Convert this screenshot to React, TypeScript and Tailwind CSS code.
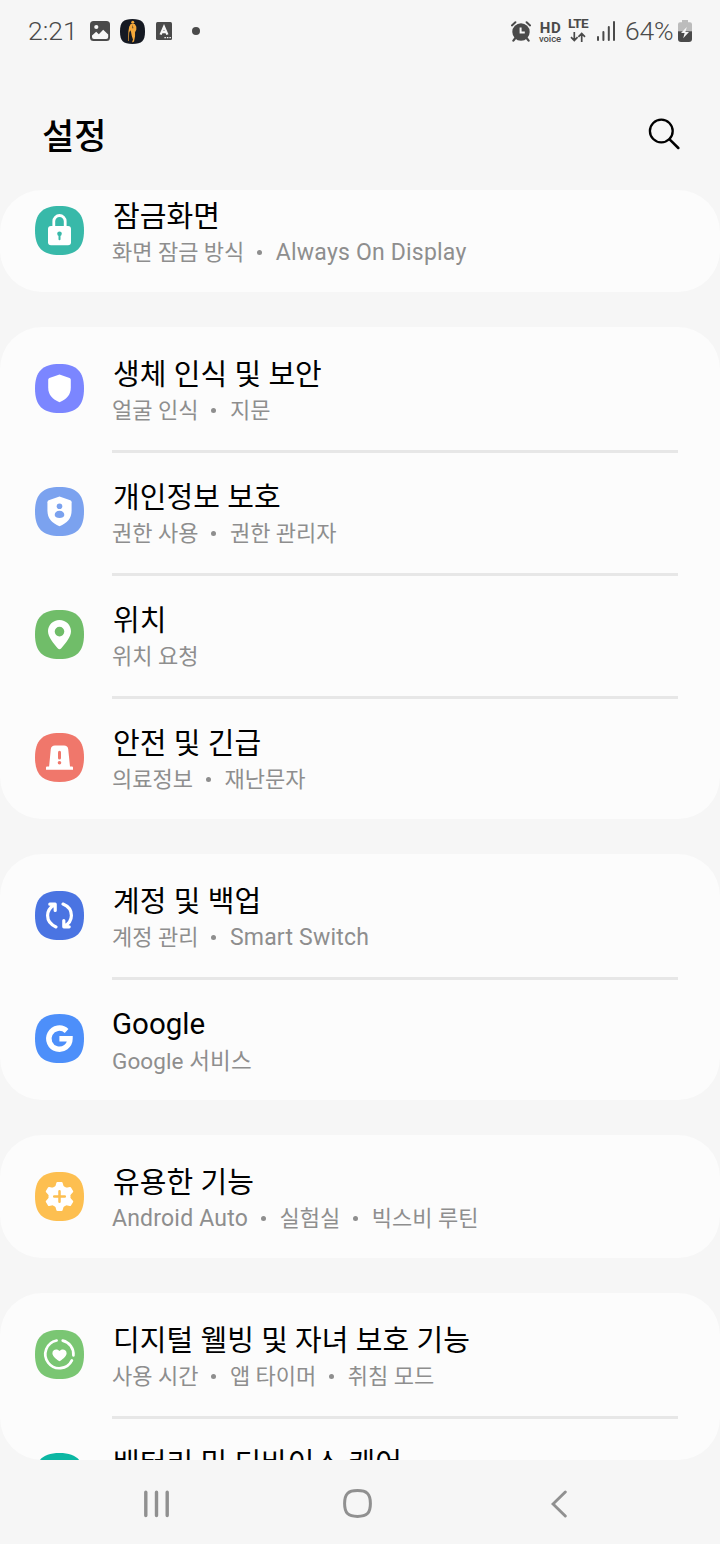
import type { ReactNode } from 'react'
import { clsx } from 'clsx'

interface Item {
  title: string
  sub: string[]
  color: string
  icon: ReactNode
}

const SHIELD = 'M24.5 10.5 L34.6 13.9 Q35.8 14.4 35.8 15.8 V23.5 C35.8 31 31.5 35.3 24.5 38.2 C17.5 35.3 13.2 31 13.2 23.5 V15.8 Q13.2 14.4 14.4 13.9 Z'

const LockIcon = (
  <>
    <path d="M18.8 21 V15.2 a5.7 5.7 0 0 1 11.4 0 V21" fill="none" stroke="#fff" strokeWidth="2.8" />
    <rect x="13" y="20" width="23" height="19.3" rx="3" />
    <circle cx="24.5" cy="27.7" r="2.3" className="fill-[#38b9a9]" />
    <path d="M24.5 28 V33.2" className="stroke-[#38b9a9]" strokeWidth="2" strokeLinecap="round" />
  </>
)

const PrivacyIcon = (
  <>
    <path d={SHIELD} transform="translate(-1.7 -1.7) scale(1.07)" />
    <circle cx="24.5" cy="19.3" r="2.8" className="fill-[#7ba2ef]" />
    <path d="M24.5 23.8 c3 0 4.8 1.8 4.8 4.2 c0 2 -2.2 3 -4.8 3 s-4.8 -1 -4.8 -3 c0 -2.4 1.8 -4.2 4.8 -4.2z" className="fill-[#7ba2ef]" />
  </>
)

const PinIcon = (
  <path
    fillRule="evenodd"
    d="M24.5 10 C31 10 36 15 36 21.3 C36 27.5 30 33.5 26.3 38.3 Q24.5 40.4 22.7 38.3 C19 33.5 13 27.5 13 21.3 C13 15 18 10 24.5 10 Z M24.5 16.8 a4.8 4.8 0 1 0 0 9.6 a4.8 4.8 0 1 0 0 -9.6 Z"
  />
)

const SirenIcon = (
  <>
    <path d="M20 12.5 H29 Q32.8 12.5 33.2 16 L35 33.6 H37 Q38 33.6 38 34.6 V36.8 H11 V34.6 Q11 33.6 12 33.6 H14.1 L15.8 16 Q16.2 12.5 20 12.5 Z" />
    <path d="M24.5 19.2 V25" className="stroke-[#f0776b]" strokeWidth="3" strokeLinecap="round" />
    <circle cx="24.5" cy="29.8" r="1.8" className="fill-[#f0776b]" />
  </>
)

const SyncIcon = (
  <g fill="none" stroke="#fff" strokeWidth="3.2" strokeLinecap="round" strokeLinejoin="round">
    <path d="M21 35.9 C15.5 33.6 12.6 29.6 12.6 24.6 C12.6 20 15 16.2 20 13.6 M14.8 13.2 H20.2 V19.4" />
    <path d="M28 13.1 C33.5 15.4 36.4 19.4 36.4 24.4 C36.4 29 34 32.8 29 35.4 M34.2 35.8 H28.8 V29.6" />
  </g>
)

const GoogleIcon = (
  <path
    d="M31.6 16.9 A10.6 10.6 0 1 0 35 24.8 H24.4"
    fill="none"
    stroke="#fff"
    strokeWidth="5.4"
  />
)

const GearIcon = (
  <>
    {[0, 60, 120].map((angle) => (
      <path
        key={angle}
        d="M22.4 10 H26.6 Q27.4 10 27.6 10.8 L29 15.5 V33.5 L27.6 38.2 Q27.4 39 26.6 39 H22.4 Q21.6 39 21.4 38.2 L20 33.5 V15.5 L21.4 10.8 Q21.6 10 22.4 10 Z"
        transform={`rotate(${angle} 24.5 24.5)`}
      />
    ))}
    <circle cx="24.5" cy="24.5" r="11" />
    <path d="M24.5 19.2 V29.8 M19.2 24.5 H29.8" className="stroke-[#fdbf50]" strokeWidth="2.5" strokeLinecap="round" />
  </>
)

const WellbeingIcon = (
  <>
    <path
      d="M27.7 10.6 A14 14 0 0 1 38.4 25.4 M36.9 30.4 A14 14 0 1 1 21.6 10.5"
      fill="none"
      stroke="#fff"
      strokeWidth="2.7"
      strokeLinecap="round"
    />
    <path d="M24.5 21 C26 18.7 31.6 18.6 31.6 23.2 C31.6 26 28.4 28.4 25.4 30.8 Q24.5 31.5 23.6 30.8 C20.6 28.4 17.4 26 17.4 23.2 C17.4 18.6 23 18.7 24.5 21 Z" />
  </>
)

const GROUPS: Item[][] = [
  [
    { title: '잠금화면', sub: ['화면 잠금 방식', 'Always On Display'], color: 'fill-[#38b9a9]', icon: LockIcon },
  ],
  [
    { title: '생체 인식 및 보안', sub: ['얼굴 인식', '지문'], color: 'fill-[#7b86ff]', icon: <path d={SHIELD} /> },
    { title: '개인정보 보호', sub: ['권한 사용', '권한 관리자'], color: 'fill-[#7ba2ef]', icon: PrivacyIcon },
    { title: '위치', sub: ['위치 요청'], color: 'fill-[#70bd69]', icon: PinIcon },
    { title: '안전 및 긴급', sub: ['의료정보', '재난문자'], color: 'fill-[#f0776b]', icon: SirenIcon },
  ],
  [
    { title: '계정 및 백업', sub: ['계정 관리', 'Smart Switch'], color: 'fill-[#4a74e2]', icon: SyncIcon },
    { title: 'Google', sub: ['Google 서비스'], color: 'fill-[#4d8ffa]', icon: GoogleIcon },
  ],
  [
    { title: '유용한 기능', sub: ['Android Auto', '실험실', '빅스비 루틴'], color: 'fill-[#fdbf50]', icon: GearIcon },
  ],
  [
    { title: '디지털 웰빙 및 자녀 보호 기능', sub: ['사용 시간', '앱 타이머', '취침 모드'], color: 'fill-[#7ac673]', icon: WellbeingIcon },
    { title: '배터리 및 디바이스 케어', sub: [], color: 'fill-[#0cb7a3]', icon: null },
  ],
]

function subTextClass(text: string) {
  if (/^[A-Za-z ]+$/.test(text)) return 'text-[23px] tracking-[0.2px]'
  if (/^[A-Za-z]/.test(text)) return 'text-[22.5px] tracking-[0.1px]'
  return 'text-[22px]'
}

export default function App() {
  return (
    <div className="flex h-[1544px] w-[720px] flex-col overflow-hidden bg-[#f6f6f6] font-['Roboto','Noto_Sans_CJK_KR',sans-serif]">
      <StatusBar />

      <header className="flex h-32 shrink-0 items-center justify-between pr-10 pl-[42px]">
        <h1 className="mt-6 text-[35px] leading-[48px] font-medium text-black">설정</h1>
        <svg className="mt-4 size-8" viewBox="0 0 32 32" fill="none" stroke="#000" strokeLinecap="round">
          <circle cx="13.3" cy="13" r="11.4" strokeWidth="2.3" />
          <path d="M21.6 21.3 L30.3 30" strokeWidth="2.5" />
        </svg>
      </header>

      {/* Scrolled list, first and last cards are cut by the viewport */}
      <main className="h-[1270px] shrink-0 overflow-hidden rounded-[42px]">
        <div className="-mt-[21px] flex flex-col gap-[35px]">
          {GROUPS.map((items) => (
            <section key={items[0].title} className="rounded-[42px] bg-[#fcfcfc]">
              {items.map((item, i) => (
                <SettingRow key={item.title} item={item} divider={i > 0} />
              ))}
            </section>
          ))}
        </div>
      </main>

      <NavBar />
    </div>
  )
}

function SettingRow({ item, divider }: { item: Item; divider: boolean }) {
  const latinTitle = /^[A-Za-z]/.test(item.title)

  return (
    <div className="flex h-[123px] pr-[42px] pl-[35px]">
      <svg className="mt-[37px] size-[49px] shrink-0" viewBox="0 0 49 49" fill="#fff">
        <path
          className={item.color}
          d="M0 24.5 C0 7.5 7.5 0 24.5 0 S49 7.5 49 24.5 41.5 49 24.5 49 0 41.5 0 24.5 Z"
        />
        {item.icon}
      </svg>
      <div className={clsx('ml-7 flex-1 border-t-3', divider ? 'border-[#e7e7e7]' : 'border-transparent')}>
        <div
          className={clsx(
            'leading-9 whitespace-nowrap text-black',
            latinTitle ? 'mt-[26px] mb-[3px] text-[29.5px]' : 'mt-[27px] mb-0.5 pl-px text-[29px] tracking-[0.05px]'
          )}
        >
          {item.title}
        </div>
        {item.sub.length > 0 && (
          <div className="flex leading-8 whitespace-nowrap text-[#8e8e8e]">
            {item.sub.map((text, i) => (
              <span key={text} className={clsx('flex items-center leading-8', subTextClass(text))}>
                {i > 0 && <span className="mr-[13.5px] mb-0.5 ml-[13px] size-[5px] rounded-full bg-[#8e8e8e]" />}
                {text}
              </span>
            ))}
          </div>
        )}
      </div>
    </div>
  )
}

function StatusBar() {
  return (
    <div className="flex h-[62px] shrink-0 items-center justify-between pr-7 pl-7 text-[#4a4a4a]">
      <div className="flex items-center">
        <span className="w-[62px] text-[26.5px] leading-8 font-light">2:21</span>
        <svg className="size-5" viewBox="0 0 20 20">
          <rect width="20" height="20" rx="3.5" fill="currentColor" />
          <circle cx="6.3" cy="6" r="2.1" fill="#f6f6f6" />
          <path d="M2 15.5 V14.5 L6.2 10.8 L8.8 13.2 L13.2 8.8 L18.2 13.6 V16 Q18.2 18 16.2 18 H4 Q2 18 2 16 Z" fill="#f6f6f6" />
        </svg>
        <svg className="ml-2.5 size-[25px]" viewBox="0 0 49 49">
          <path d="M0 24.5 C0 6 6 0 24.5 0 S49 6 49 24.5 43 49 24.5 49 0 43 0 24.5 Z" fill="#151922" />
          <g fill="#f4a83a">
            <circle cx="25" cy="6.5" r="3" />
            <path d="M21 10 L29 10 L32 15 L32 21 L29.5 26 L29.5 34 L27.5 44 L23.5 46 L25.5 40 L23 33 L21.5 25 L20 22 L18 27 L17.2 43 L16 43 L16.5 24 L18 15 Z" />
          </g>
          <path d="M25 11 L24.3 18 L26 18 Z" fill="#151922" />
        </svg>
        <svg className="ml-[11px] h-[18px] w-4" viewBox="0 0 16 18">
          <rect width="16" height="18" rx="1.5" fill="currentColor" />
          <path d="M4.6 12.6 L8 4.8 L11.4 12.6 M5.8 10.2 H10.2" fill="none" stroke="#f6f6f6" strokeWidth="2.3" />
          <path d="M8.4 15.6 H15" stroke="#f6f6f6" strokeWidth="1.2" strokeDasharray="1.5 1" />
        </svg>
        <span className="ml-5 size-2 rounded-full bg-current" />
      </div>

      <div className="flex items-center">
        <svg className="h-[21px] w-5" viewBox="0 0 20 21" fill="none" stroke="currentColor" strokeLinecap="round">
          <circle cx="10" cy="11" r="8.7" fill="currentColor" stroke="none" />
          <path d="M0.9 4.4 L4.4 1.2 M15.6 1.2 L19.1 4.4" strokeWidth="2" />
          <path d="M4 17.5 L2.4 19.6 M16 17.5 L17.6 19.6" strokeWidth="2.2" />
          <path d="M9.6 6.4 V11.6 H13.8" stroke="#f6f6f6" strokeWidth="2" strokeLinecap="butt" />
        </svg>
        <div className="ml-[7px] flex w-6 flex-col items-center pt-1">
          <span className="pl-px text-[15px] leading-[11px] font-bold tracking-[0.7px]">HD</span>
          <span className="text-[9.5px] leading-[9px] font-medium tracking-[-0.1px]">voice</span>
        </div>
        <div className="ml-1 flex w-6 flex-col items-center">
          <span className="mb-[3px] -mt-[3px] text-[13.5px] leading-[11px] font-bold tracking-[-0.6px]">LTE</span>
          <svg className="h-[10px] w-4" viewBox="0 0 16 10" fill="none" stroke="currentColor" strokeWidth="1.7">
            <path d="M4.3 0 V8.6 M1 5.2 L4.3 8.6 L7.6 5.2 M11.7 10 V1.4 M8.4 4.8 L11.7 1.4 L15 4.8" />
          </svg>
        </div>
        <svg className="ml-[7px] h-5 w-[18px]" viewBox="0 0 18 20" fill="currentColor">
          <rect x="0" y="15" width="2" height="5" rx="1" />
          <rect x="5.4" y="10" width="2" height="10" rx="1" />
          <rect x="10.8" y="5" width="2" height="15" rx="1" />
          <rect x="16" y="0" width="2" height="20" rx="1" />
        </svg>
        <span className="ml-2.5 w-[53px] text-[26.5px] leading-8 font-light tracking-[-0.2px]">64%</span>
        <svg className="h-[22px] w-[14px]" viewBox="0 0 14 22">
          <path d="M4 0 H10 V2.2 H12 Q14 2.2 14 4.2 V11.5 H0 V4.2 Q0 2.2 2 2.2 H4 Z" fill="#bcbcbc" />
          <path d="M0 11.3 H14 V19 Q14 22 11 22 H3 Q0 22 0 19 Z" fill="currentColor" />
          <path d="M8.8 7 L3 13 H6.6 L5.2 18.2 L11 12 H7.4 Z" fill="#f6f6f6" />
        </svg>
      </div>
    </div>
  )
}

function NavBar() {
  return (
    <nav className="flex h-[84px] shrink-0 items-center pt-[3px] pl-36 text-[#909090]">
      <svg className="h-7 w-[25px]" viewBox="0 0 25 28" stroke="currentColor" strokeWidth="3.4" strokeLinecap="round">
        <path d="M1.8 2.2 V25.6 M12.5 2.2 V25.6 M23.2 2.2 V25.6" />
      </svg>
      <svg className="ml-[174px] size-[29px]" viewBox="0 0 29 29" fill="none" stroke="currentColor" strokeWidth="3">
        <path d="M14.5 1.6 C24 1.6 27.4 5 27.4 14.5 S24 27.4 14.5 27.4 1.6 24 1.6 14.5 5 1.6 14.5 1.6 Z" />
      </svg>
      <svg className="ml-[179px] h-7 w-4" viewBox="0 0 16 28" fill="none" stroke="currentColor" strokeWidth="2.9" strokeLinecap="round">
        <path d="M14.3 2 L2 14 L14.3 26" />
      </svg>
    </nav>
  )
}
